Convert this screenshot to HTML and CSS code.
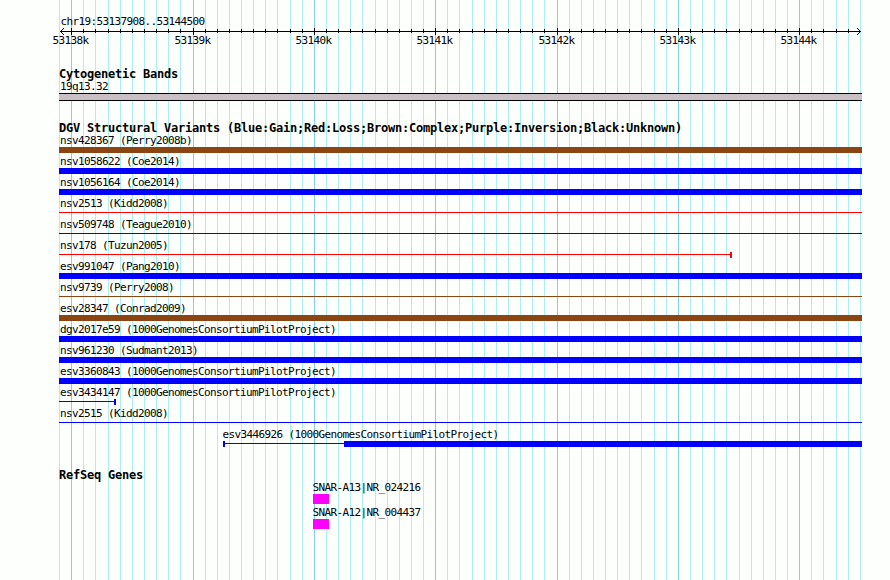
FILE: index.html
```
<!DOCTYPE html>
<html lang="en">
<head>
    <meta charset="UTF-8">
    <meta name="viewport" content="width=device-width, initial-scale=1.0">
    <title>chr19:53137908..53144500</title>
    <link rel="stylesheet" href="styles.css">
</head>
<body>
    <div class="browser">
        <svg class="gridlines" id="gridlines" width="890" height="580" shape-rendering="crispEdges"></svg>

        <div class="panel">
            <div class="region">chr19:53137908..53144500</div>
            <svg class="axis" id="axis" width="890" height="8" shape-rendering="crispEdges">
                <path class="axis-line" d="M60 4.5H861"/>
                <path class="arrow" d="M60 4h1v1h-1zM61 3h1v3h-1zM62 2h1v1h-1zM62 6h1v1h-1zM63 1h1v1h-1zM63 7h1v1h-1z"/>
                <path class="arrow" d="M860 4h1v1h-1zM859 3h1v3h-1zM858 2h1v1h-1zM858 6h1v1h-1zM857 1h1v1h-1zM857 7h1v1h-1z"/>
            </svg>
            <div class="scale">
                <span>53138k</span>
                <span>53139k</span>
                <span>53140k</span>
                <span>53141k</span>
                <span>53142k</span>
                <span>53143k</span>
                <span>53144k</span>
            </div>

            <section class="track cyto">
                <h2>Cytogenetic Bands</h2>
                <div class="label">19q13.32</div>
                <div class="band"></div>
            </section>

            <section class="track variants">
                <h2>DGV Structural Variants (Blue:Gain;Red:Loss;Brown:Complex;Purple:Inversion;Black:Unknown)</h2>
                <div class="label">nsv428367 (Perry2008b)</div>
                <div class="lane complex"><i class="thick"></i></div>
                <div class="label">nsv1058622 (Coe2014)</div>
                <div class="lane gain"><i class="thick"></i></div>
                <div class="label">nsv1056164 (Coe2014)</div>
                <div class="lane gain"><i class="thick"></i></div>
                <div class="label">nsv2513 (Kidd2008)</div>
                <div class="lane loss"><i class="thin"></i></div>
                <div class="label">nsv509748 (Teague2010)</div>
                <div class="lane gain"><i class="thin"></i></div>
                <div class="label">nsv178 (Tuzun2005)</div>
                <div class="lane loss to-43k"><i class="thin"></i><i class="cap"></i></div>
                <div class="label">esv991047 (Pang2010)</div>
                <div class="lane gain"><i class="thick"></i></div>
                <div class="label">nsv9739 (Perry2008)</div>
                <div class="lane complex"><i class="thin"></i></div>
                <div class="label">esv28347 (Conrad2009)</div>
                <div class="lane complex"><i class="thick"></i></div>
                <div class="label">dgv2017e59 (1000GenomesConsortiumPilotProject)</div>
                <div class="lane gain"><i class="thick"></i></div>
                <div class="label">nsv961230 (Sudmant2013)</div>
                <div class="lane gain"><i class="thick"></i></div>
                <div class="label">esv3360843 (1000GenomesConsortiumPilotProject)</div>
                <div class="lane gain"><i class="thick"></i></div>
                <div class="label">esv3434147 (1000GenomesConsortiumPilotProject)</div>
                <div class="lane gain to-38k"><i class="thin"></i><i class="cap"></i></div>
                <div class="label">nsv2515 (Kidd2008)</div>
                <div class="lane gain"><i class="thin"></i></div>
                <div class="from-39k">
                    <div class="label">esv3446926 (1000GenomesConsortiumPilotProject)</div>
                    <div class="lane gain"><i class="cap"></i><i class="thin intron"></i><i class="thick"></i></div>
                </div>
            </section>

            <section class="track genes">
                <h2>RefSeq Genes</h2>
                <div class="gene">
                    <div class="label">SNAR-A13|NR_024216</div>
                    <div class="exon"></div>
                </div>
                <div class="gene">
                    <div class="label">SNAR-A12|NR_004437</div>
                    <div class="exon"></div>
                </div>
            </section>
        </div>
    </div>
    <script>
const majors = [71, 193, 314, 435, 557, 678, 799];
const positions = [
    59, 71, 83, 95, 108, 120, 132, 144, 156, 168, 180,
    193, 205, 217, 229, 241, 253, 265, 277, 290, 302,
    314, 326, 338, 350, 362, 375, 387, 399, 411, 423,
    435, 447, 459, 472, 484, 496, 508, 520, 532, 544,
    557, 569, 581, 593, 605, 617, 629, 641, 654, 666,
    678, 690, 702, 714, 726, 739, 751, 763, 775, 787,
    799, 811, 823, 836, 848, 860
];

function addRect(svg, x, y, height, className) {
    const rect = document.createElementNS("http://www.w3.org/2000/svg", "rect");
    rect.setAttribute("x", x);
    rect.setAttribute("y", y);
    rect.setAttribute("width", 1);
    rect.setAttribute("height", height);
    rect.setAttribute("class", className);
    svg.appendChild(rect);
}

const gridlines = document.getElementById("gridlines");
const axis = document.getElementById("axis");

positions.forEach(x => {
    const major = majors.includes(x);
    addRect(gridlines, x, 0, 580, major ? "major" : "minor");
    if (x > 59 && x < 860) {
        addRect(axis, x, major ? 1 : 2, major ? 7 : 4, "tick");
    }
});
    </script>
</body>
</html>
```
FILE: styles.css
```
* {
    box-sizing: border-box;
}

body {
    margin: 0;
    background-color: #fcfffc;
    color: #000;
    font-family: "DejaVu Sans Mono", monospace;
    font-size: 11px;
    line-height: 15px;
    letter-spacing: -0.622px;
    overflow: hidden;
}

.browser {
    position: relative;
    width: 890px;
    height: 580px;
    overflow: hidden;
}

/* guide lines run behind every track */
.gridlines {
    position: absolute;
    top: 0;
    left: 0;
}

.minor {
    fill: #afeeee;
}

.major {
    fill: #87ceeb;
}

.panel {
    position: relative;
    padding-top: 14px;
}

.region {
    height: 13px;
    padding-left: 60.5px;
}

.axis {
    display: block;
}

.axis-line {
    stroke: #000;
}

.arrow, .tick {
    fill: #000;
}

.scale {
    display: grid;
    grid-template-columns: 122px 121px 121px 122px 121px 121px 60px;
    height: 12px;
    margin-top: -2px;
    padding-left: 52.5px;
}

.track {
    width: 803px;
    margin-left: 59px;
}

.cyto {
    padding-top: 21px;
}

.variants {
    padding-top: 19px;
}

.genes {
    padding-top: 20px;
}

h2 {
    height: 12px;
    margin: 0;
    font-size: 12px;
    line-height: 17px;
    letter-spacing: -0.224px;
    white-space: nowrap;
}

.label {
    height: 15px;
    padding: 1px 0 0 1px;
    white-space: nowrap;
}

.band {
    height: 8px;
    background: #c8c0c4;
    border: solid #000;
    border-width: 1px 0;
}

.lane {
    display: flex;
    height: 6px;
}

.thick {
    flex: 1;
    background: currentColor;
}

.thin {
    flex: 1;
    height: 1px;
    margin-top: 2px;
    background: currentColor;
}

.cap {
    width: 2px;
    background: currentColor;
}

.gain {
    color: #0000ff;
}

.loss {
    color: #ff0000;
}

.complex {
    color: #8b4513;
}

.to-43k {
    width: 673px;
}

.to-38k {
    width: 57px;
}

.from-39k {
    padding-left: 164px;
}

.from-39k .label {
    padding-left: 0;
    margin-left: -0.5px;
}

.intron {
    flex: 0 0 119px;
}

.gene {
    padding-left: 254px;
}

.gene .label {
    padding-left: 0;
    margin-left: -0.5px;
}

.exon {
    width: 16px;
    height: 10px;
    background: #ff00ff;
}
```
